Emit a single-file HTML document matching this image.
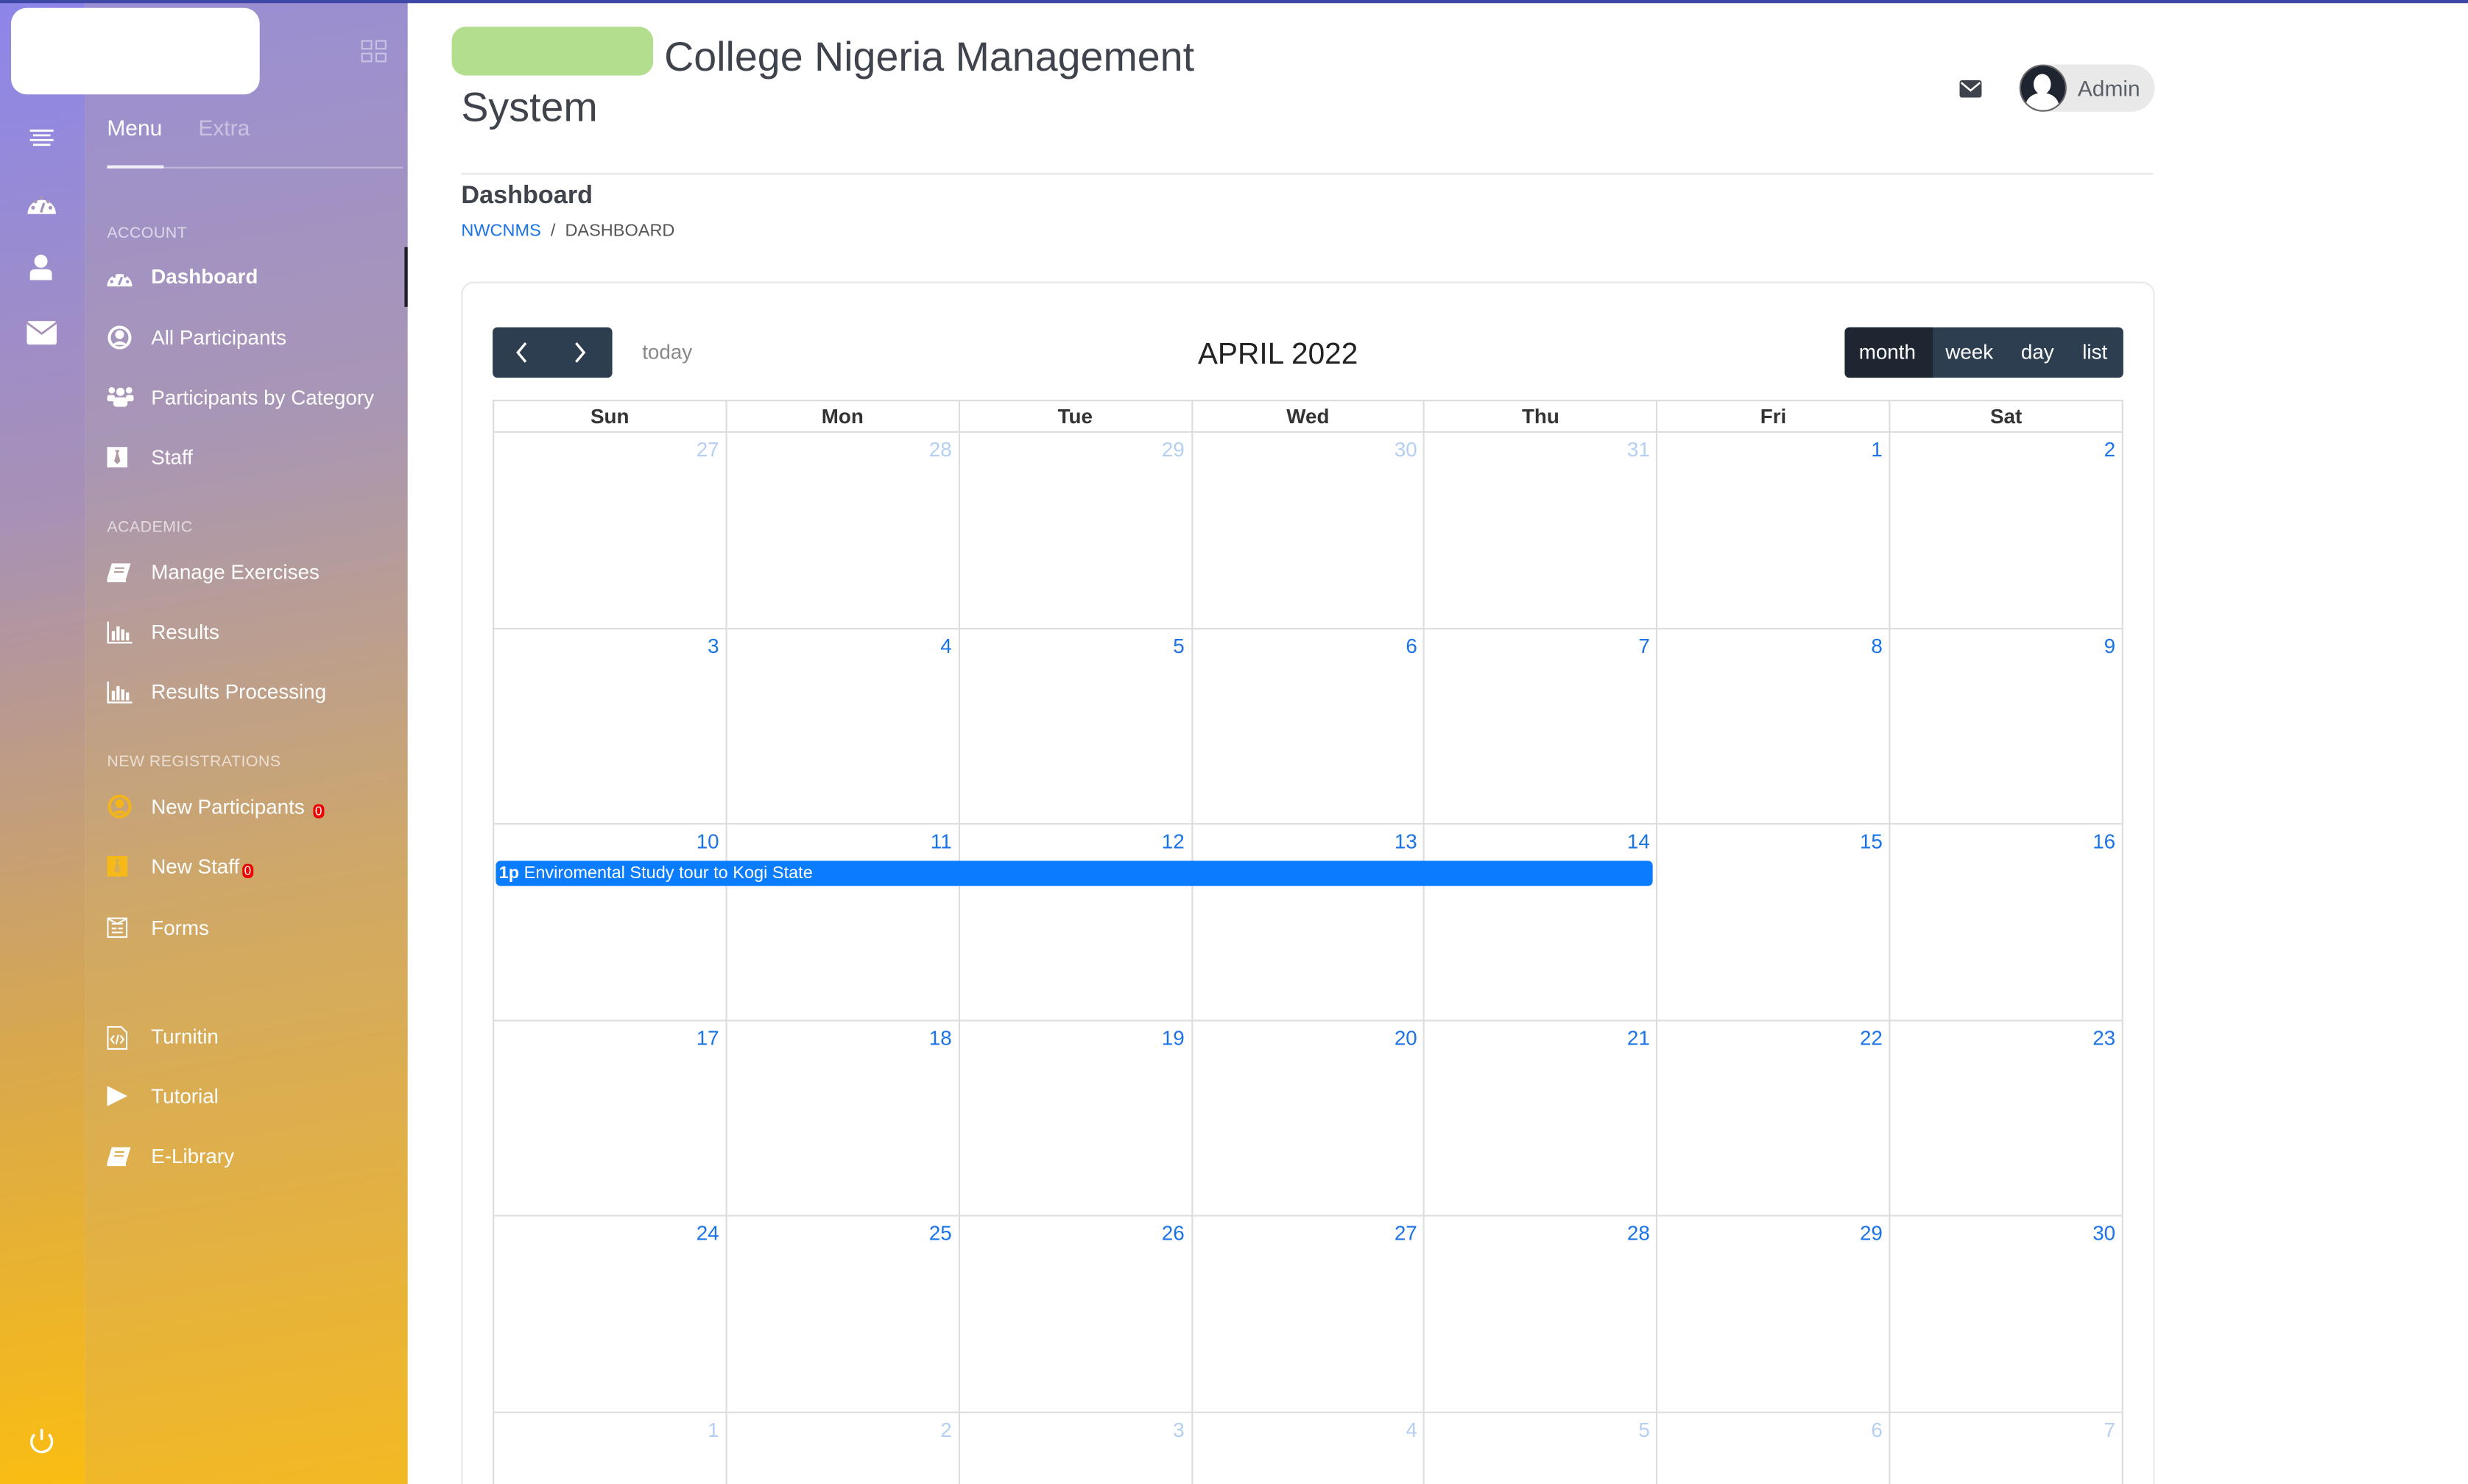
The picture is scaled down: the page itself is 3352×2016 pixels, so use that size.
<!DOCTYPE html>
<html><head><meta charset="utf-8"><style>
*{box-sizing:border-box;margin:0;padding:0}
html,body{width:3352px;height:2016px;overflow:hidden;background:#fff}
#w{position:absolute;left:0;top:0;width:1568px;height:943px;transform:scale(2.13776,2.13786);transform-origin:0 0;font-family:"Liberation Sans",Arial,sans-serif;overflow:hidden}
.abs{position:absolute}
#strip{left:0;top:0;width:54px;height:943px;background:linear-gradient(170deg,#8c86ea 0%,#a891b5 35%,#d8a84e 70%,#fabd12 100%)}
#menu{left:54px;top:0;width:205px;height:943px;background:linear-gradient(170deg,#9a8ed4 0%,#a996b4 30%,#d0a866 60%,#f3b923 100%)}
#topline{left:0;top:0;width:1568px;height:2px;background:#3e48a6}
.mi{position:absolute;left:96px;color:#fff;font-size:13px}
.ic{position:absolute;left:68px;width:16px;height:14px}
.sec{position:absolute;left:68px;font-size:10px;color:rgba(255,255,255,.65);letter-spacing:.2px}
.badge{display:inline-block;background:#e00;color:#fff;font-size:8px;line-height:9px;padding:0 1px;border-radius:3px;vertical-align:-1px;margin-left:2px}
table{position:absolute;left:313px;top:254px;width:1036px;border-collapse:collapse;table-layout:fixed}
th{height:20px;border:1px solid #ddd;font-size:13px;color:#333;font-weight:bold}
td{height:124.6px;border:1px solid #ddd;vertical-align:top;text-align:right;font-size:13px;color:#1a73e8;padding:3px 4px 0 0}
td.o{color:#b5cff2}
.btn{background:#2c3e50;color:#fff;font-size:13px}
</style></head><body><div id="w">
<div id="strip" class="abs"></div>
<div id="menu" class="abs"></div>
<div id="topline" class="abs"></div>
<div class="abs" style="left:7px;top:5px;width:158px;height:55px;background:#fff;border-radius:10px"></div>
<svg class="abs" style="left:229px;top:25px" width="17" height="16" viewBox="0 0 17 16" fill="none" stroke="rgba(255,255,255,.45)" stroke-width="1"><rect x="1" y="1" width="6" height="5"/><rect x="10" y="1" width="6" height="5"/><rect x="1" y="9" width="6" height="5"/><rect x="10" y="9" width="6" height="5"/></svg>
<svg class="abs" style="left:18px;top:81px" width="17" height="14" viewBox="0 0 17 14" stroke="#fff" stroke-width="1.3"><path d="M1 2h15M3 5h11M1 8h15M3 11h11"/></svg>
<svg class="abs" style="left:17px;top:121px" width="19" height="15" viewBox="0 0 19 15"><circle cx="9.5" cy="15" r="9" fill="#fff"/><circle cx="4" cy="11" r="1.2" fill="#a893bd"/><circle cx="5.5" cy="7" r="1.2" fill="#a893bd"/><circle cx="9.5" cy="4.5" r="1.2" fill="#a893bd"/><circle cx="13.5" cy="7" r="1.2" fill="#a893bd"/><circle cx="15" cy="11" r="1.2" fill="#a893bd"/><path d="M9 14L11 8" stroke="#a893bd" stroke-width="1.6"/></svg>
<svg class="abs" style="left:19px;top:161px" width="14" height="17" viewBox="0 0 14 17" fill="#fff"><circle cx="7" cy="5" r="4.2"/><path d="M0 17V13Q0 10 4 10H10Q14 10 14 13V17Z"/></svg>
<svg class="abs" style="left:17px;top:204px" width="19" height="15" viewBox="0 0 19 15"><rect width="19" height="15" rx="1.5" fill="#fff"/><path d="M0 1L9.5 8L19 1" stroke="#a891b5" stroke-width="1.3" fill="none"/></svg>
<svg class="abs" style="left:18px;top:907px" width="17" height="17" viewBox="0 0 17 17" fill="none" stroke="#fff" stroke-width="1.6"><path d="M8.5 1V8"/><path d="M4 4.5A6.5 6.5 0 1 0 13 4.5"/></svg>
<div class="abs" style="left:68px;top:73px;color:#fff;font-size:14px">Menu</div>
<div class="abs" style="left:126px;top:73px;color:rgba(255,255,255,.45);font-size:14px">Extra</div>
<div class="abs" style="left:68px;top:106px;width:188px;height:1px;background:rgba(255,255,255,.35)"></div>
<div class="abs" style="left:68px;top:105px;width:36px;height:2px;background:rgba(255,255,255,.8)"></div>
<div class="abs" style="left:257px;top:157px;width:2px;height:38px;background:#1e1e2a"></div>
<div class="sec" style="top:143px">ACCOUNT</div>
<svg class="abs" style="left:68px;top:169px" width="16" height="13" viewBox="0 0 16 13"><circle cx="8" cy="13" r="8" fill="#fff"/><circle cx="3" cy="10" r="1" fill="#a08fc0"/><circle cx="4.5" cy="6.5" r="1" fill="#a08fc0"/><circle cx="8" cy="4" r="1" fill="#a08fc0"/><circle cx="11.5" cy="6.5" r="1" fill="#a08fc0"/><circle cx="13" cy="10" r="1" fill="#a08fc0"/><path d="M7.5 12L9.5 7" stroke="#a08fc0" stroke-width="1.4"/></svg>
<div class="mi" style="top:168px;font-weight:bold">Dashboard</div>
<svg class="ic" style="top:207px;height:15px" viewBox="0 0 16 16"><circle cx="8" cy="8" r="7" fill="none" stroke="#fff" stroke-width="2"/><circle cx="8" cy="6" r="3" fill="#fff"/><path d="M3 13Q8 8 13 13" fill="#fff"/></svg>
<div class="mi" style="top:207px">All Participants</div>
<svg class="ic" style="top:245px;width:17px" viewBox="0 0 17 14" fill="#fff"><circle cx="3" cy="3" r="2"/><circle cx="14" cy="3" r="2"/><circle cx="8.5" cy="4" r="2.6"/><rect x="0" y="6" width="5" height="4" rx="1.5"/><rect x="12" y="6" width="5" height="4" rx="1.5"/><rect x="4" y="7.5" width="9" height="6" rx="2"/></svg>
<div class="mi" style="top:245px">Participants by Category</div>
<svg class="ic" style="top:284px;width:13px;height:13px" viewBox="0 0 13 13"><rect width="13" height="13" fill="#fff"/><path d="M5 2h3l-1 2 1.5 5L6.5 11 4.5 9 6 4z" fill="#b09aa0"/></svg>
<div class="mi" style="top:283px">Staff</div>
<div class="sec" style="top:330px">ACADEMIC</div>
<svg class="ic" style="top:357px;width:15px" viewBox="0 0 15 14"><path d="M3 1H15L12 11H0Z" fill="#fff"/><path d="M0 11H12V13H0Z" fill="#fff"/><path d="M5 4h6M4.5 6.5h6" stroke="#b5a09a" stroke-width="1"/></svg>
<div class="mi" style="top:356px">Manage Exercises</div>
<svg class="ic" style="top:395px" viewBox="0 0 16 14" fill="#fff"><path d="M0 0h1.2v12.8H16V14H0z"/><rect x="3" y="6" width="2" height="6"/><rect x="6" y="3" width="2" height="9"/><rect x="9" y="5" width="2" height="7"/><rect x="12" y="7" width="2" height="5"/></svg>
<div class="mi" style="top:394px">Results</div>
<svg class="ic" style="top:433px" viewBox="0 0 16 14" fill="#fff"><path d="M0 0h1.2v12.8H16V14H0z"/><rect x="3" y="6" width="2" height="6"/><rect x="6" y="3" width="2" height="9"/><rect x="9" y="5" width="2" height="7"/><rect x="12" y="7" width="2" height="5"/></svg>
<div class="mi" style="top:432px">Results Processing</div>
<div class="sec" style="top:479px">NEW REGISTRATIONS</div>
<svg class="ic" style="top:505px;height:15px" viewBox="0 0 16 16"><circle cx="8" cy="8" r="7" fill="none" stroke="#f4b51a" stroke-width="2"/><circle cx="8" cy="6" r="3" fill="#f4b51a"/><path d="M3 13Q8 8 13 13" fill="#f4b51a"/></svg>
<div class="mi" style="top:505px">New Participants <span class="badge">0</span></div>
<svg class="ic" style="top:544px;width:13px;height:13px" viewBox="0 0 13 13"><rect width="13" height="13" fill="#f6b917"/><path d="M5 2h3l-1 2 1.5 5L6.5 11 4.5 9 6 4z" fill="#d6ad55"/></svg>
<div class="mi" style="top:543px">New Staff<span class="badge">0</span></div>
<svg class="ic" style="top:583px;width:13px;height:13px" viewBox="0 0 13 13" fill="none" stroke="#fff" stroke-width="1"><rect x=".5" y=".5" width="12" height="12"/><path d="M3 4h7M3 7h3M7 7h3M3 9.5h7M1 1l5.5 3L12 1"/></svg>
<div class="mi" style="top:582px">Forms</div>
<svg class="ic" style="top:652px;width:13px;height:15px" viewBox="0 0 13 15" fill="none" stroke="#fff" stroke-width="1"><path d="M.5.5H9L12.5 4V14.5H.5Z"/><path d="M4.5 6L2.5 8.5 4.5 11M8.5 6L10.5 8.5 8.5 11M7.2 5.5L5.8 11.5"/></svg>
<div class="mi" style="top:651px">Turnitin</div>
<svg class="ic" style="top:690px;width:13px;height:13px" viewBox="0 0 13 13"><path d="M0 0L13 6.5L0 13Z" fill="#fff"/></svg>
<div class="mi" style="top:689px">Tutorial</div>
<svg class="ic" style="top:728px;width:15px" viewBox="0 0 15 14"><path d="M3 1H15L12 11H0Z" fill="#fff"/><path d="M0 11H12V13H0Z" fill="#fff"/><path d="M5 4h6M4.5 6.5h6" stroke="#d8ae4e" stroke-width="1"/></svg>
<div class="mi" style="top:727px">E-Library</div>

<div class="abs" style="left:287px;top:17px;width:128px;height:31px;background:#b3de8d;border-radius:9px"></div>
<div class="abs" style="left:422px;top:21px;font-size:26px;color:#3e434c">College Nigeria Management</div>
<div class="abs" style="left:293px;top:53px;font-size:26px;color:#3e434c">System</div>
<svg class="abs" style="left:1245px;top:51px" width="14" height="11" viewBox="0 0 14 11"><rect width="14" height="11" rx="1.5" fill="#3e434c"/><path d="M1 1.5L7 6.5L13 1.5" stroke="#fff" stroke-width="1.2" fill="none"/></svg>
<div class="abs" style="left:1283px;top:41px;width:86px;height:30px;background:#e9e9e9;border-radius:15px"></div>
<div class="abs" style="left:1283px;top:41px;width:30px;height:30px;border-radius:50%;background:#1e2530;border:1.5px solid #666;overflow:hidden"><div class="abs" style="left:8px;top:5px;width:11px;height:13px;border-radius:50%;background:#fff"></div><div class="abs" style="left:3px;top:17px;width:21px;height:16px;border-radius:50% 50% 0 0;background:#fff"></div></div>
<div class="abs" style="left:1320px;top:48px;font-size:14px;color:#5a5f69">Admin</div>
<div class="abs" style="left:293px;top:110px;width:1075px;height:1px;background:#e6e6e6"></div>
<div class="abs" style="left:293px;top:116px;font-size:16px;font-weight:bold;color:#3e434c">Dashboard</div>
<div class="abs" style="left:293px;top:141px;font-size:11px;color:#555"><span style="color:#1a73e8">NWCNMS</span>&nbsp;&nbsp;/&nbsp;&nbsp;DASHBOARD</div>
<div class="abs" style="left:293px;top:179px;width:1076px;height:800px;border:1px solid #e9e9e9;border-radius:8px"></div>
<div class="abs btn" style="left:313px;top:208px;width:76px;height:32px;border-radius:3px"></div>
<svg class="abs" style="left:326px;top:217px" width="50" height="14" viewBox="0 0 50 14" fill="none" stroke="#fff" stroke-width="1.6"><path d="M8 1L3 7L8 13M40 1L45 7L40 13"/></svg>
<div class="abs" style="left:408px;top:216px;font-size:13px;color:#888">today</div>
<div class="abs" style="left:761px;top:215px;font-size:19px;color:#222">APRIL 2022</div>
<div class="abs btn" style="left:1172px;top:208px;width:177px;height:32px;border-radius:3px"></div>
<div class="abs" style="left:1172px;top:208px;width:56px;height:32px;background:#1e2731;border-radius:3px 0 0 3px"></div>
<div class="abs" style="left:1181px;top:216px;font-size:13px;color:#fff">month</div>
<div class="abs" style="left:1236px;top:216px;font-size:13px;color:#fff">week</div>
<div class="abs" style="left:1284px;top:216px;font-size:13px;color:#fff">day</div>
<div class="abs" style="left:1323px;top:216px;font-size:13px;color:#fff">list</div>
<table>
<tr><th>Sun</th><th>Mon</th><th>Tue</th><th>Wed</th><th>Thu</th><th>Fri</th><th>Sat</th></tr>
<tr><td class="o">27</td><td class="o">28</td><td class="o">29</td><td class="o">30</td><td class="o">31</td><td>1</td><td>2</td></tr>
<tr><td>3</td><td>4</td><td>5</td><td>6</td><td>7</td><td>8</td><td>9</td></tr>
<tr><td>10</td><td>11</td><td>12</td><td>13</td><td>14</td><td>15</td><td>16</td></tr>
<tr><td>17</td><td>18</td><td>19</td><td>20</td><td>21</td><td>22</td><td>23</td></tr>
<tr><td>24</td><td>25</td><td>26</td><td>27</td><td>28</td><td>29</td><td>30</td></tr>
<tr><td class="o">1</td><td class="o">2</td><td class="o">3</td><td class="o">4</td><td class="o">5</td><td class="o">6</td><td class="o">7</td></tr>
</table>
<div class="abs" style="left:315px;top:547px;width:735px;height:16px;background:#0a7cff;border-radius:3px;color:#fff;font-size:11px;line-height:16px;padding-left:2px"><b>1p</b> Enviromental Study tour to Kogi State</div>
</div></body></html>
